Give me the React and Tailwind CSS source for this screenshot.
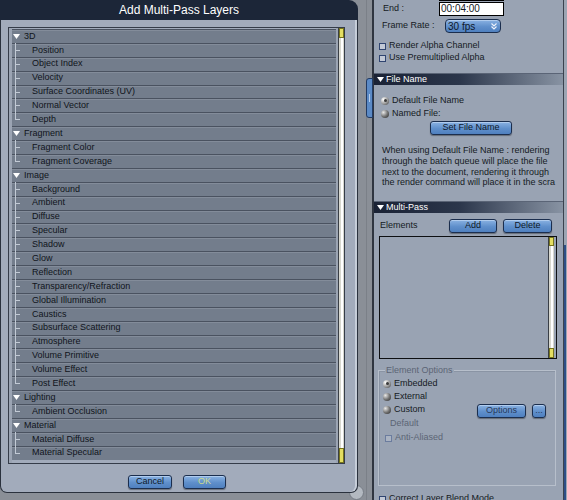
// Add Multi-Pass Layers dialog over the render settings panel
const tree = [
  ['3D', ['Position', 'Object Index', 'Velocity', 'Surface Coordinates (UV)', 'Normal Vector', 'Depth']],
  ['Fragment', ['Fragment Color', 'Fragment Coverage']],
  [
    'Image',
    [
      'Background', 'Ambient', 'Diffuse', 'Specular', 'Shadow', 'Glow', 'Reflection',
      'Transparency/Refraction', 'Global Illumination', 'Caustics', 'Subsurface Scattering',
      'Atmosphere', 'Volume Primitive', 'Volume Effect', 'Post Effect',
    ],
  ],
  ['Lighting', ['Ambient Occlusion']],
  ['Material', ['Material Diffuse', 'Material Specular']],
]

const btn =
  'h-[14px] rounded-[3px] border border-[#1b2e4e] bg-[linear-gradient(#8ab2e2,#5f8fcb_55%,#4f80bf)] shadow-[inset_0_1px_0_#b0ccee,0_1px_1px_rgba(0,0,0,0.35)] text-[9px] flex items-center justify-center'

function Triangle({ color = '#fff' }) {
  return (
    <svg width="7" height="5" viewBox="0 0 7 5">
      <path d="M0 0H7L3.5 5Z" fill={color} />
    </svg>
  )
}

function TreeRow({ label, parent, last }) {
  return (
    <div className="relative h-[13.9px] shrink-0 border-t border-[#4a5260] bg-[#737d8c] shadow-[inset_0_1px_0_#838c9a] flex items-center text-[9px] text-[#10141b]">
      {parent ? (
        <>
          <span className="absolute left-[1px] top-[4px] flex">
            <Triangle />
          </span>
          <span className="pl-[12px]">{label}</span>
        </>
      ) : (
        <>
          <span className={`absolute left-[3px] top-[-1px] w-px bg-[#c2cad5] ${last ? 'h-[8px]' : 'h-[15px]'}`} />
          <span className="absolute left-[4px] top-[6px] h-px w-[4px] bg-[#c2cad5]" />
          <span className="pl-[20px]">{label}</span>
        </>
      )}
    </div>
  )
}

function Scrollbar({ top = 'h-[10px]', bottom = 'h-[15px]' }) {
  return (
    <div className="w-[6px] flex flex-col border-l border-[#3a3f46] bg-[#d6d6ce]">
      <div className={`${top} bg-[#e4de62] border border-[#76731c]`} />
      <div className="flex-1 flex justify-center">
        <div className="w-[2px] bg-white" />
      </div>
      <div className={`${bottom} bg-[#e4de62] border border-[#76731c]`} />
    </div>
  )
}

function Check({ label, disabled }) {
  return (
    <div className={`flex items-center gap-[3px] ${disabled ? 'text-[#5c6575]' : ''}`}>
      <span
        className={`w-[7px] h-[7px] border ${disabled ? 'border-[#6b7c9e] bg-[#aab3c2]' : 'border-[#2f4470] bg-[#c2c9d6]'}`}
      />
      <span>{label}</span>
    </div>
  )
}

function Radio({ label, on }) {
  return (
    <div className="flex items-center gap-[3px]">
      <span
        className={`w-[8px] h-[8px] rounded-full flex items-center justify-center ${
          on
            ? 'bg-[radial-gradient(circle_at_30%_30%,#ffffff,#9a9a9a_55%,#3a3a3a)]'
            : 'bg-[radial-gradient(circle_at_30%_30%,#e8e8e8,#6e6e6e_55%,#262626)]'
        }`}
      >
        {on && <span className="w-[3px] h-[3px] rounded-full bg-[#3b3b3b]" />}
      </span>
      <span>{label}</span>
    </div>
  )
}

function Header({ label }) {
  return (
    <div className="h-[12px] shrink-0 bg-[linear-gradient(to_right,#1a2235,#2b364b_45%,#8893a3)] border-t border-[#5a6476] flex items-center gap-[2px] pl-[3px] text-white text-[9px]">
      <Triangle />
      <span>{label}</span>
    </div>
  )
}

function Dialog() {
  const rows = []
  tree.forEach(([group, items]) => {
    rows.push(<TreeRow key={group} label={group} parent />)
    items.forEach((it, i) => rows.push(<TreeRow key={it} label={it} last={i === items.length - 1} />))
  })

  return (
    <div className="w-[358px] h-[493px] shrink-0 flex flex-col relative z-10">
      <div className="h-[20px] shrink-0 bg-[#1c2638] rounded-tr-[9px] flex items-center justify-center text-white text-[12px]">
        Add Multi-Pass Layers
      </div>
      <div className="flex-1 flex flex-col bg-[#a2abbb] border-l border-r border-b border-[#2a313d] rounded-b-[7px] shadow-[inset_-2px_0_0_#c6cdd8] pl-[7px] pt-[7px]">
        <div className="w-[337px] h-[437px] border border-[#353c49] flex">
          <div className="w-[3px] bg-[#9ba4b3]" />
          <div className="flex-1 flex flex-col pt-[1px] overflow-hidden">{rows}</div>
          <div className="w-[2px] bg-[#9ba4b3]" />
          <Scrollbar />
        </div>
        <div className="flex gap-[11px] ml-[120px] mt-[11px]">
          <div className={`${btn} w-[44px] text-[#0e1828]`}>Cancel</div>
          <div className={`${btn} w-[43px] text-[#cbdb8c]`}>OK</div>
        </div>
      </div>
    </div>
  )
}

function Panel() {
  return (
    <div className="w-[189px] shrink-0 flex flex-col bg-[#99a3b3] text-[9px] text-[#151a23] overflow-hidden">
      {/* start field, scrolled mostly out of view */}
      <div className="h-[14px] shrink-0 -mt-[13px] flex items-center pl-[65px]">
        <div className="w-[65px] h-[14px] border border-black bg-white" />
      </div>
      <div className="h-[14px] shrink-0 mt-[1px] flex items-center pl-[9px]">
        <span className="w-[56px]">End :</span>
        <div className="w-[65px] h-[14px] border border-black bg-white text-[10px] leading-[12px] pl-[1px]">00:04:00</div>
      </div>
      <div className="h-[14px] shrink-0 mt-[3px] flex items-center pl-[8px]">
        <span className="w-[63px]">Frame Rate :</span>
        <div className="w-[56px] h-[14px] rounded-[4px] border border-[#1b2e4e] bg-[linear-gradient(#8ab2e2,#5f8fcb_55%,#4f80bf)] shadow-[inset_0_1px_0_#b0ccee] flex items-center justify-between pl-[2px] pr-[3px] text-[10px] text-[#0e1828]">
          <span>30 fps</span>
          <svg width="6" height="7" viewBox="0 0 6 7">
            <path d="M0.5 0.5L3 3L5.5 0.5M0.5 3.5L3 6L5.5 3.5" fill="none" stroke="#eef3fb" strokeWidth="1.1" />
          </svg>
        </div>
      </div>
      <div className="h-[12px] shrink-0 mt-[7px] flex items-center pl-[5px]">
        <Check label="Render Alpha Channel" />
      </div>
      <div className="h-[12px] shrink-0 flex items-center pl-[5px]">
        <Check label="Use Premultiplied Alpha" />
      </div>
      <div className="mt-[9px]">
        <Header label="File Name" />
      </div>
      <div className="h-[13px] shrink-0 mt-[9px] flex items-center pl-[7px]">
        <Radio label="Default File Name" on />
      </div>
      <div className="h-[13px] shrink-0 flex items-center pl-[7px]">
        <Radio label="Named File:" />
      </div>
      <div className={`${btn} h-[13px] w-[82px] ml-[56px] mt-[1px] shrink-0 text-[#0e1828]`}>Set File Name</div>
      <div className="mt-[10px] pl-[8px] leading-[10.8px] whitespace-nowrap">
        <div>When using Default File Name : rendering</div>
        <div>through the batch queue will place the file</div>
        <div>next to the document, rendering it through</div>
        <div>the render command will place it in the scra</div>
      </div>
      <div className="mt-[13px]">
        <Header label="Multi-Pass" />
      </div>
      <div className="h-[14px] shrink-0 mt-[6px] flex items-center pl-[6px]">
        <span className="w-[69px]">Elements</span>
        <div className="flex gap-[6px]">
          <div className={`${btn} w-[48px] text-[#0e1828]`}>Add</div>
          <div className={`${btn} w-[49px] text-[#0e1828]`}>Delete</div>
        </div>
      </div>
      <div className="h-[123px] w-[178px] shrink-0 ml-[5px] mt-[3px] border border-[#0d0f12] bg-[#99a3b3] flex justify-end pr-[2px]">
        <Scrollbar top="h-[9px]" bottom="h-[10px]" />
      </div>
      <div className="relative h-[116px] w-[178px] shrink-0 ml-[4px] mt-[11px] border border-[#b7bfcb] shadow-[inset_1px_1px_0_#8a94a4] pt-[6px]">
        <span className="absolute -top-[7px] left-[6px] px-[1px] bg-[#99a3b3] text-[#5c6575]">Element Options</span>
        <div className="h-[13px] flex items-center pl-[4px]">
          <Radio label="Embedded" on />
        </div>
        <div className="h-[13px] flex items-center pl-[4px]">
          <Radio label="External" />
        </div>
        <div className="h-[14px] flex items-center justify-between pl-[4px] pr-[9px]">
          <Radio label="Custom" />
          <div className="flex gap-[6px] mt-[1px]">
            <div className={`${btn} w-[49px] h-[13px] text-[#27395b]`}>Options</div>
            <div className={`${btn} w-[14px] h-[13px] text-[#27395b]`}>...</div>
          </div>
        </div>
        <div className="h-[14px] flex items-center pl-[11px] text-[#5c6575]">Default</div>
        <div className="h-[14px] flex items-center pl-[6px]">
          <Check label="Anti-Aliased" disabled />
        </div>
      </div>
      <div className="h-[10px] shrink-0 mt-[8px] flex items-center pl-[5px]">
        <Check label="Correct Layer Blend Mode" />
      </div>
    </div>
  )
}

export default function App() {
  return (
    <div className="w-[567px] h-[500px] overflow-hidden relative flex bg-[#8a8f97] font-['Liberation_Sans',Arial,sans-serif]">
      <Dialog />
      {/* gutter between dialog and panel */}
      <div className="w-[14px] shrink-0 flex pl-[8px]">
        <div className="w-px bg-[#7b8088]" />
      </div>
      <div className="w-[2px] shrink-0 bg-[#2f3540]" />
      <Panel />
      <div className="w-px shrink-0 bg-[#3b424e]" />
      <div className="w-[3px] shrink-0 flex flex-col bg-[#9ca5b3]">
        <div className="h-[245px]" />
        <div className="flex-1 flex">
          <div className="w-[2px] bg-[#2d4f86]" />
        </div>
      </div>
      {/* sidebar handle */}
      <div className="absolute left-[366px] top-[78px] w-[7px] h-[40px] rounded-l-[3px] border border-[#213a63] bg-[#5b8ac6] flex items-center justify-center">
        <div className="w-px h-[8px] bg-[#b9d0ee]" />
      </div>
      {/* resize knob behind the dialog corner */}
      <div className="absolute left-[349px] top-[485px] w-[15px] h-[15px] rounded-full bg-[#b3b9c1] border border-[#767c85]" />
    </div>
  )
}
